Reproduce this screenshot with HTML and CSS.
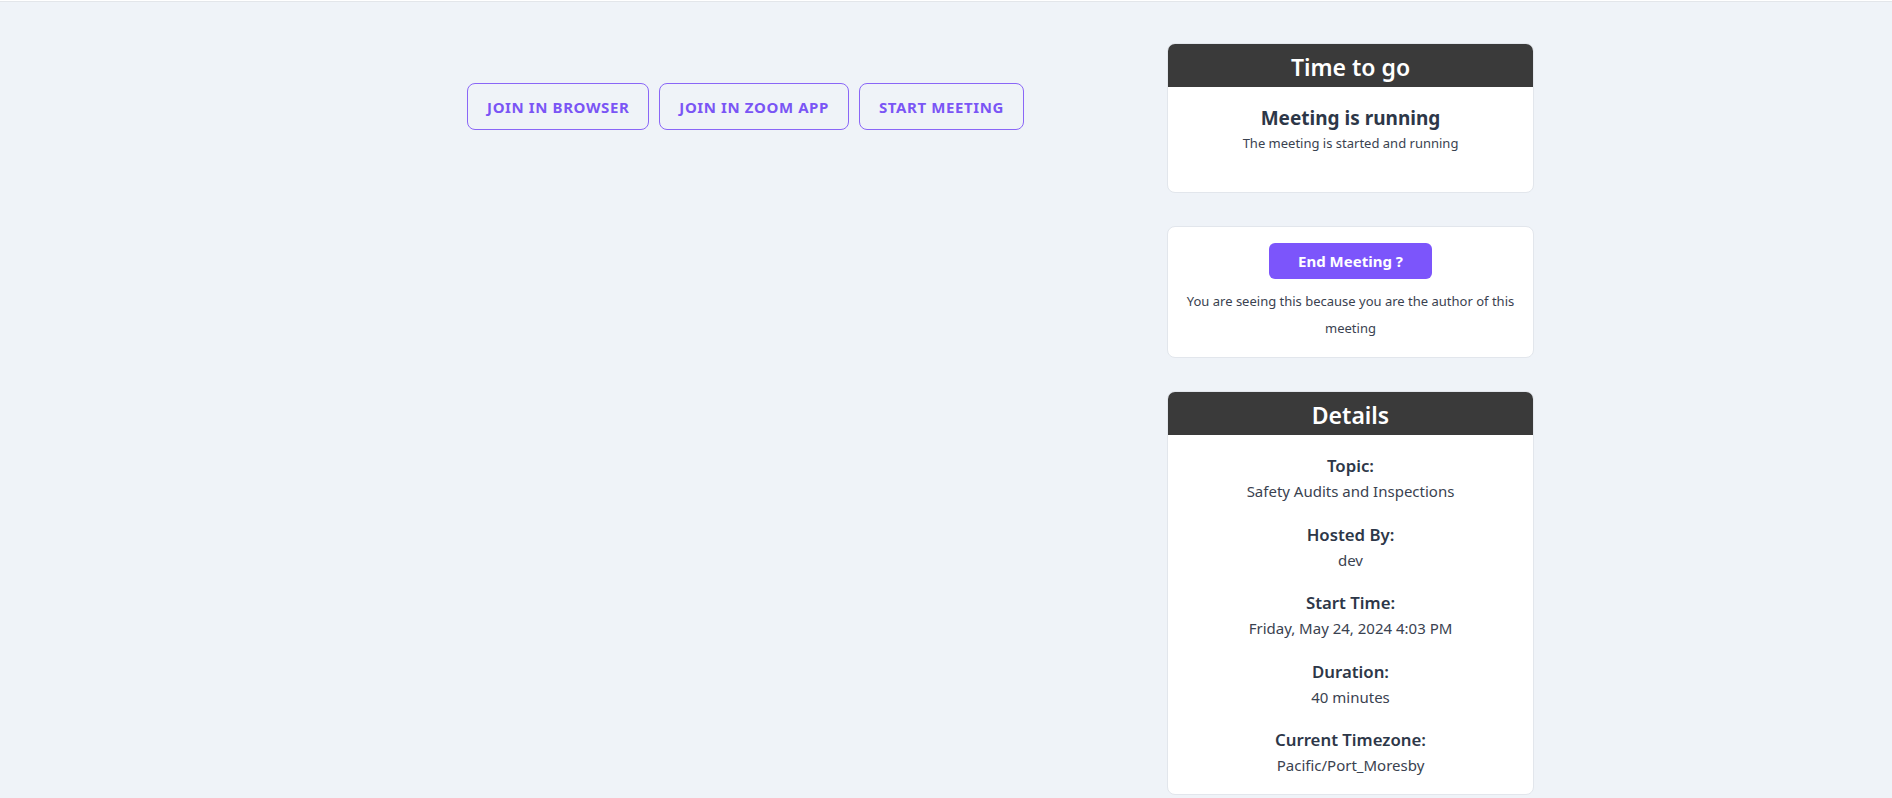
FILE: index.html
```html
<!DOCTYPE html>
<html lang="en">
<head>
<meta charset="utf-8">
<title>Meeting</title>
<link rel="stylesheet" href="styles.css">
</head>
<body>
<div class="topbar"></div>
<div class="layout">
  <main class="main-col">
    <div class="actions">
      <button class="btn-outline">Join in browser</button>
      <button class="btn-outline">Join in Zoom app</button>
      <button class="btn-outline">Start meeting</button>
    </div>
  </main>
  <aside class="side-col">
    <section class="card">
      <header class="card-head">Time to go</header>
      <div class="card-body status">
        <h3 class="status-title">Meeting is running</h3>
        <p class="status-text">The meeting is started and running</p>
      </div>
    </section>
    <section class="card">
      <div class="card-body author">
        <button class="btn-solid">End Meeting ?</button>
        <p class="author-text">You are seeing this because you are the author of this meeting</p>
      </div>
    </section>
    <section class="card">
      <header class="card-head">Details</header>
      <div class="card-body details">
        <div class="detail">
          <div class="detail-label">Topic:</div>
          <div class="detail-value">Safety Audits and Inspections</div>
        </div>
        <div class="detail">
          <div class="detail-label">Hosted By:</div>
          <div class="detail-value">dev</div>
        </div>
        <div class="detail">
          <div class="detail-label">Start Time:</div>
          <div class="detail-value">Friday, May 24, 2024 4:03 PM</div>
        </div>
        <div class="detail">
          <div class="detail-label">Duration:</div>
          <div class="detail-value">40 minutes</div>
        </div>
        <div class="detail">
          <div class="detail-label">Current Timezone:</div>
          <div class="detail-value">Pacific/Port_Moresby</div>
        </div>
      </div>
    </section>
  </aside>
</div>
</body>
</html>
```

FILE: styles.css
```css
* { box-sizing: border-box; }
html, body { margin: 0; padding: 0; }
body {
  background: #eff3f8;
  font-family: "Noto Sans", "Open Sans", sans-serif;
  color: #2d3748;
  height: 798px;
  overflow: hidden;
}
.topbar {
  height: 2px;
  background: #fff;
  border-bottom: 1px solid #e3e6ea;
}
.layout {
  display: flex;
  margin-left: 336px;
  width: 1210px;
}
.main-col {
  width: 819px;
  padding-top: 81px;
}
.actions {
  display: flex;
  justify-content: center;
  gap: 10px;
}
.btn-outline {
  height: 47px;
  padding: 0 19px;
  background: transparent;
  border: 1px solid #8a66f7;
  border-radius: 8px;
  color: #7a55f5;
  font-family: inherit;
  font-size: 15px;
  font-weight: 700;
  text-transform: uppercase;
  letter-spacing: 0.6px;
}
.side-col {
  flex: 1;
  padding: 41px 12px 0;
  display: flex;
  flex-direction: column;
  gap: 33px;
}
.card {
  background: #fff;
  border: 1px solid #e2e6ec;
  border-radius: 8px;
  overflow: hidden;
}
.card-head {
  height: 44px;
  padding-top: 4px;
  background: #3a3a3a;
  color: #fff;
  font-size: 23px;
  font-weight: 600;
  display: flex;
  align-items: center;
  justify-content: center;
  margin: -1px -1px 0;
}
.card-body { text-align: center; }
.status { padding: 17px 16px 39px; }
.status-title {
  margin: 0;
  font-size: 19px;
  font-weight: 700;
  line-height: 28px;
}
.status-text {
  margin: 1px 0 0;
  font-size: 13px;
  line-height: 20px;
  color: #3a4250;
}
.author { padding: 16px 16px 15px; }
.btn-solid {
  height: 36px;
  width: 163px;
  border: none;
  border-radius: 6px;
  background: #7c55fb;
  color: #fff;
  font-family: inherit;
  font-size: 15px;
  font-weight: 700;
}
.author-text {
  margin: 9px 0 0;
  font-size: 13px;
  line-height: 27px;
  color: #3a4250;
}
.details {
  padding: 19px 16px 16px;
  display: flex;
  flex-direction: column;
  gap: 18.6px;
}
.detail-label {
  font-size: 16.8px;
  font-weight: 600;
  line-height: 24px;
  color: #2d3748;
}
.detail-value {
  font-size: 15px;
  line-height: 26px;
  color: #3a4250;
}
```
